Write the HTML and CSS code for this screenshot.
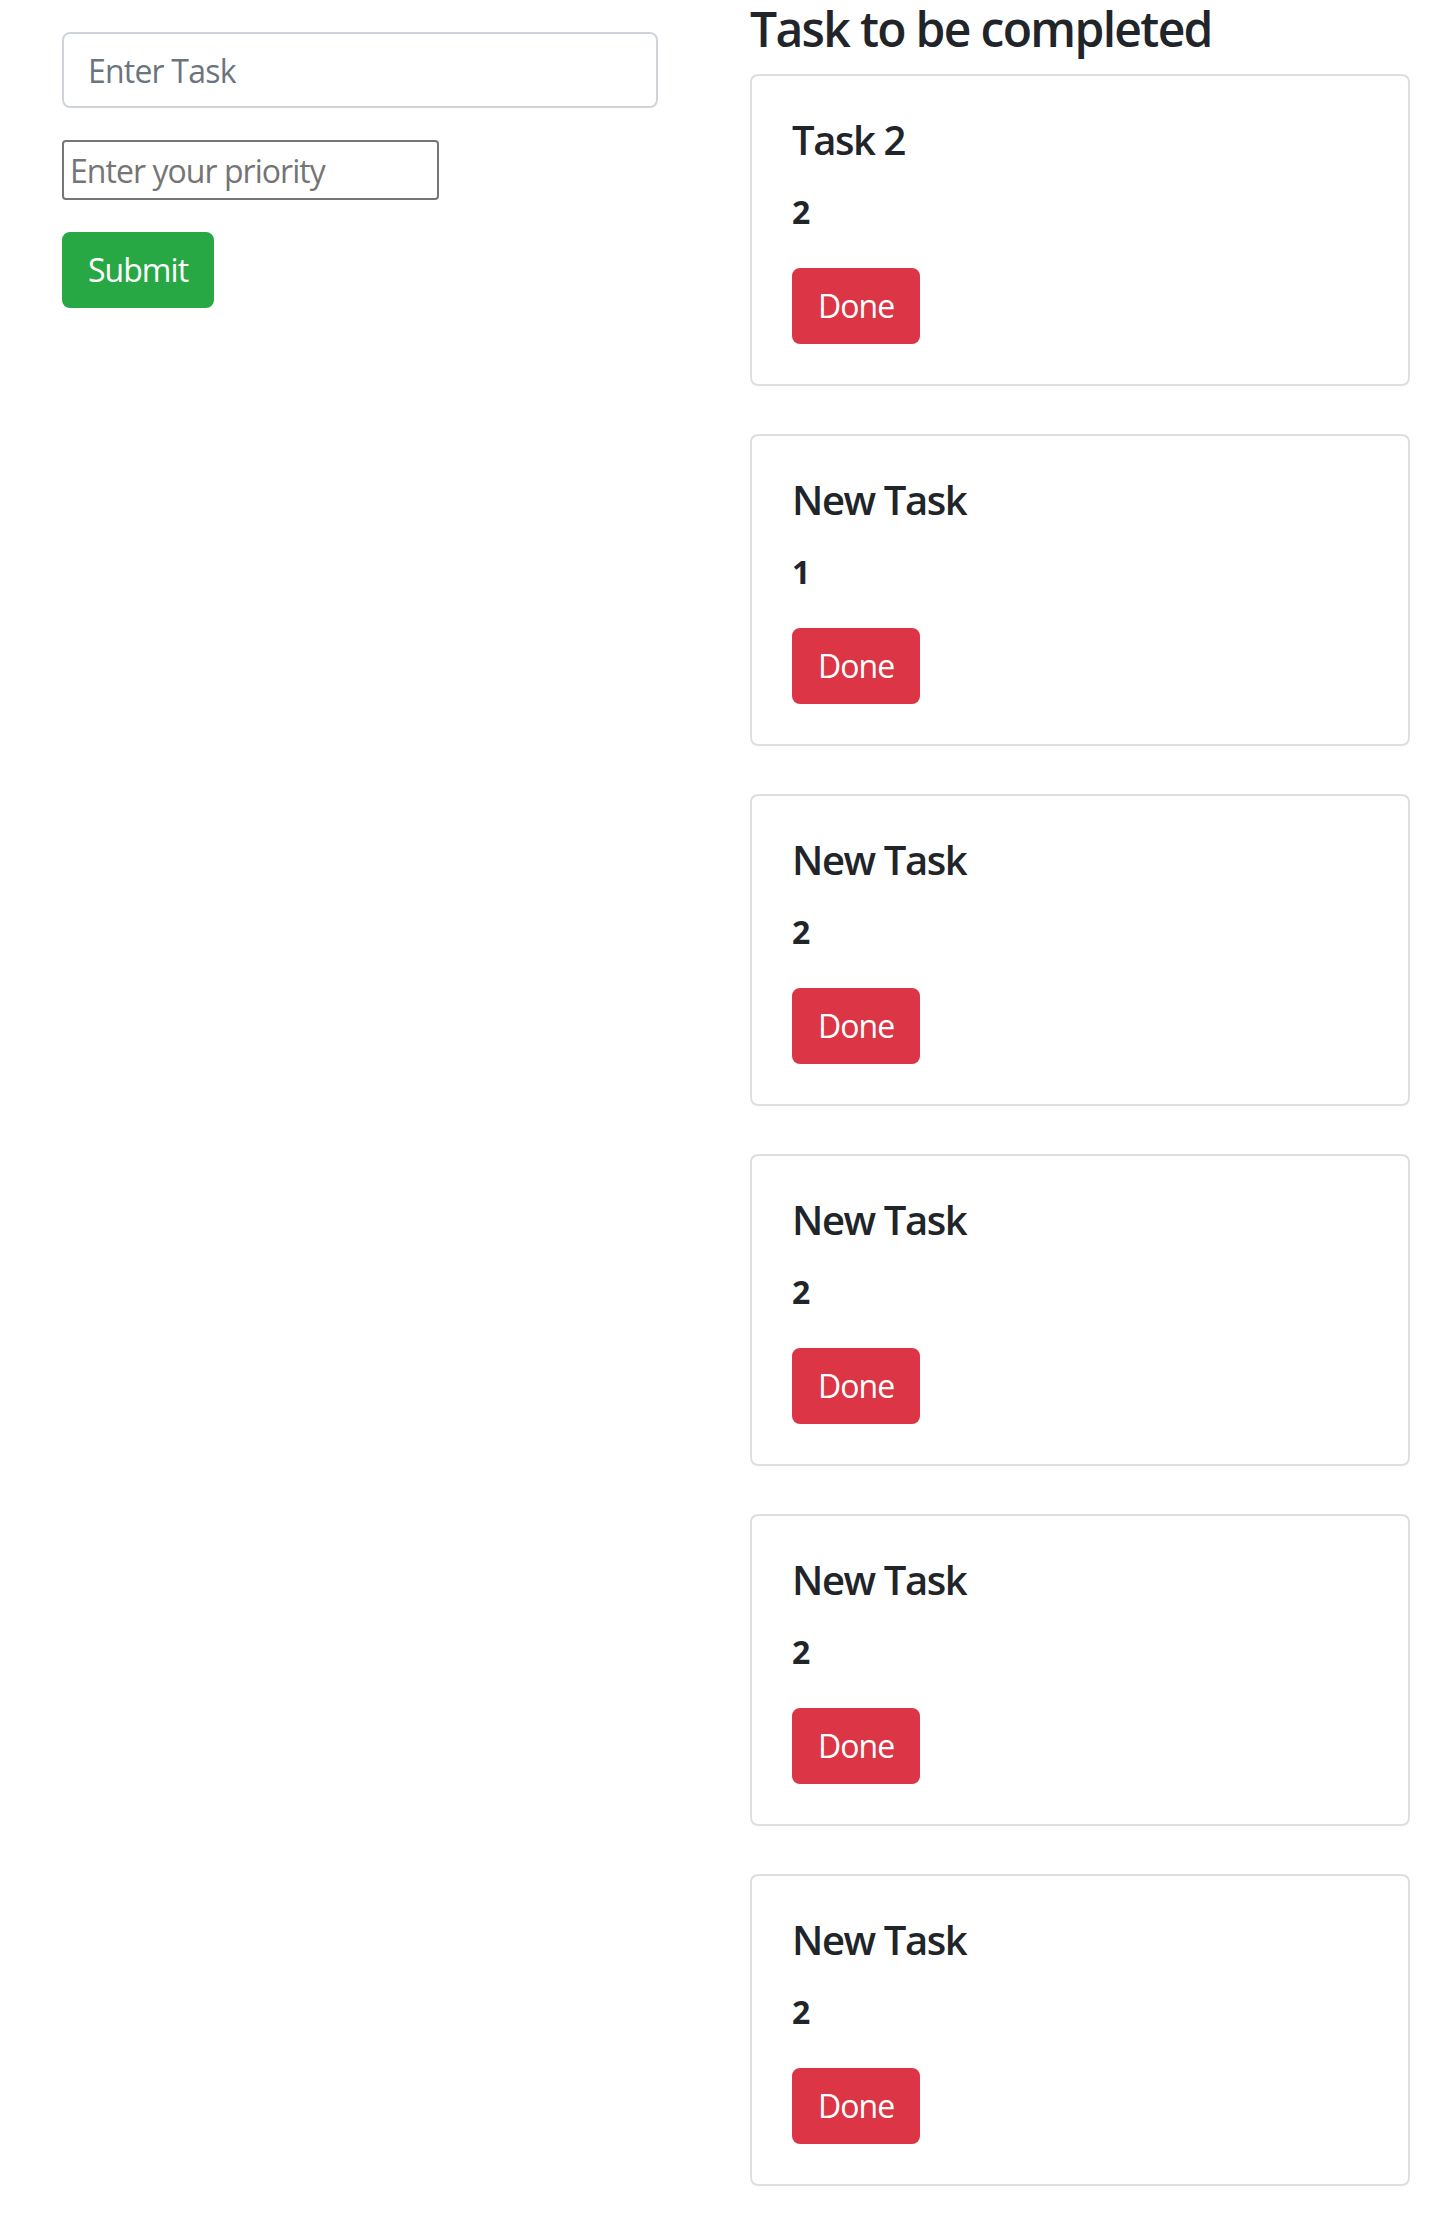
FILE: index.html
```html
<!DOCTYPE html>
<html lang="en">
<head>
<meta charset="utf-8">
<title>Tasks</title>
<link rel="stylesheet" href="styles.css">
</head>
<body>
<div class="row">
  <div class="col">
    <form class="task-form">
      <input class="form-control" type="text" placeholder="Enter Task">
      <input class="priority" type="number" placeholder="Enter your priority">
      <button class="btn btn-success" type="button">Submit</button>
    </form>
  </div>
  <div class="col">
    <h4 class="list-title">Task to be completed</h4>
    <div class="card"><div class="card-body"><h5 class="card-title">Task 2</h5><p class="priority-value">2</p><button class="btn btn-danger" type="button">Done</button></div></div>
    <div class="card"><div class="card-body"><h5 class="card-title">New Task</h5><p class="priority-value">1</p><button class="btn btn-danger" type="button">Done</button></div></div>
    <div class="card"><div class="card-body"><h5 class="card-title">New Task</h5><p class="priority-value">2</p><button class="btn btn-danger" type="button">Done</button></div></div>
    <div class="card"><div class="card-body"><h5 class="card-title">New Task</h5><p class="priority-value">2</p><button class="btn btn-danger" type="button">Done</button></div></div>
    <div class="card"><div class="card-body"><h5 class="card-title">New Task</h5><p class="priority-value">2</p><button class="btn btn-danger" type="button">Done</button></div></div>
    <div class="card"><div class="card-body"><h5 class="card-title">New Task</h5><p class="priority-value">2</p><button class="btn btn-danger" type="button">Done</button></div></div>
  </div>
</div>
</body>
</html>
```

FILE: styles.css
```css
* { box-sizing: border-box; }

html, body {
  margin: 0;
  padding: 0;
  background: #fff;
}

body {
  font-family: "Open Sans", "Noto Sans", sans-serif;
  font-size: 32px;
  line-height: 1.5;
  color: #212529;
  letter-spacing: -0.025em;
}

.row {
  display: flex;
}

.col {
  flex: 1 1 50%;
  padding: 0 30px;
  min-width: 0;
}

.task-form {
  margin: 32px;
  display: flex;
  flex-direction: column;
  align-items: flex-start;
}

.form-control {
  display: block;
  width: 100%;
  height: 76px;
  padding: 12px 24px;
  font: inherit;
  font-size: 32px;
  line-height: 48px;
  letter-spacing: -0.025em;
  color: #495057;
  background: #fff;
  border: 2px solid #ced4da;
  border-radius: 8px;
  margin-bottom: 32px;
  outline: none;
}

.form-control::placeholder { color: #6c757d; }

.priority {
  display: block;
  width: 377px;
  height: 60px;
  padding: 4px 6px;
  font: inherit;
  font-size: 32px;
  line-height: 48px;
  letter-spacing: -0.03em;
  color: #212529;
  background: #fff;
  border: 2px solid #767676;
  border-radius: 4px;
  margin-bottom: 32px;
  outline: none;
  -moz-appearance: textfield;
}

.priority::placeholder { color: #757575; }
.priority::-webkit-outer-spin-button,
.priority::-webkit-inner-spin-button { -webkit-appearance: none; margin: 0; }

.btn {
  display: inline-block;
  font: inherit;
  font-size: 32px;
  line-height: 48px;
  letter-spacing: -0.03em;
  padding: 12px 24px;
  border: 2px solid transparent;
  border-radius: 8px;
  color: #fff;
  cursor: pointer;
}

.btn-success {
  background: #28a745;
  border-color: #28a745;
}

.btn-danger {
  background: #dc3545;
  border-color: #dc3545;
}

.list-title {
  margin: 0 0 16px;
  font-size: 48px;
  font-weight: 600;
  line-height: 1.2;
  letter-spacing: -0.035em;
}

.card {
  border: 2px solid rgba(0, 0, 0, 0.125);
  border-radius: 8px;
  background: #fff;
  margin-bottom: 48px;
}

.card-body {
  padding: 40px;
}

.card-title {
  margin: 0 0 24px;
  font-size: 40px;
  font-weight: 600;
  line-height: 1.2;
  letter-spacing: -0.035em;
}

.priority-value {
  margin: 0 0 32px;
  font-weight: 700;
  line-height: 48px;
}
```
